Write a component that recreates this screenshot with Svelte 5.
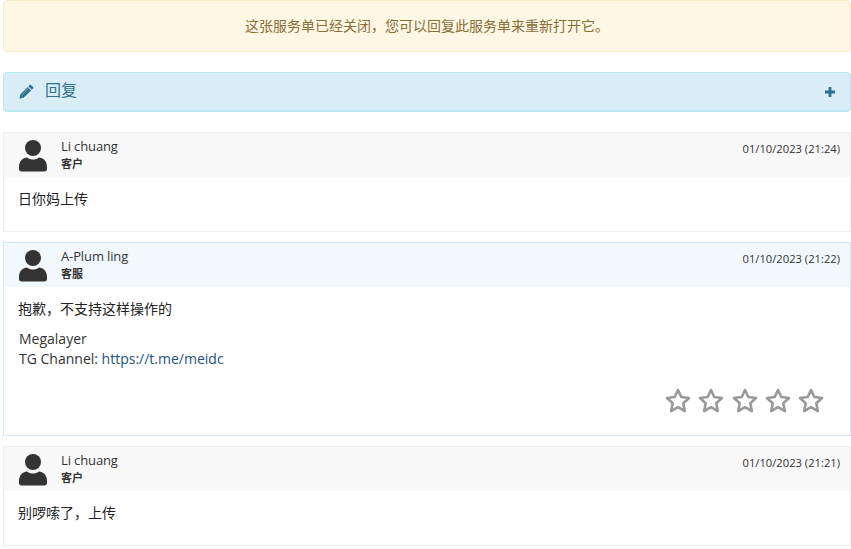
<script>
  const stars = [1, 2, 3, 4, 5];

  const replies = [
    { name: "Li chuang", role: "客户", date: "01/10/2023 (21:24)", staff: false, text: "日你妈上传" },
    { name: "A-Plum ling", role: "客服", date: "01/10/2023 (21:22)", staff: true, text: "抱歉，不支持这样操作的" },
    { name: "Li chuang", role: "客户", date: "01/10/2023 (21:21)", staff: false, text: "别啰嗦了，上传" },
  ];
</script>

<main>
  <div class="alert">这张服务单已经关闭，您可以回复此服务单来重新打开它。</div>

  <div class="reply-bar">
    <svg class="pencil" viewBox="0 0 16 16" width="15" height="15">
      <path d="M11.300 1a1 1 0 0 1 1.400 0l2.300 2.300a1 1 0 0 1 0 1.400l-1.300 1.300-3.700-3.700z M9.200 3.100l3.700 3.700-7.700 7.700-4.700 1.100 1-4.800z" />
      <path class="shine" d="M3 11.500l7-7" />
    </svg>
    <span class="bar-title">回复</span>
    <span class="plus">
      <svg viewBox="0 0 10 10" width="10" height="10"><path d="M3.600 0h2.800v3.600H10v2.800H6.400V10H3.600V6.400H0V3.600h3.600z" /></svg>
    </span>
  </div>

  {#each replies as r}
    <section class="ticket" class:staff={r.staff}>
      <header>
        <svg class="avatar" viewBox="0 0 28 32" width="28" height="32">
          <circle cx="14" cy="8" r="8" />
          <path d="M0 27c0-6 4-9.500 8-9.500 2 1.500 4 2 6 2s4-.5 6-2c4 0 8 3.500 8 9.500v2c0 1.500-1 2.500-2.500 2.500h-23C1 31.500 0 30.500 0 29z" />
        </svg>
        <div class="who">
          <div class="name">{r.name}</div>
          <div class="role">{r.role}</div>
        </div>
        <div class="date">{r.date}</div>
      </header>
      <div class="body">
        <p>{r.text}</p>
        {#if r.staff}
          <div class="sig">Megalayer<br />TG Channel: <a href="#top">https://t.me/meidc</a></div>
          <div class="rating">
            {#each stars as s}
              <svg viewBox="0 0 26 26" width="26" height="26">
                <path d="M13 2l3.300 7 7.700 1-5.700 5.300 1.500 7.700-6.800-3.800-6.800 3.800 1.500-7.700L2 10l7.700-1z" />
              </svg>
            {/each}
          </div>
        {/if}
      </div>
    </section>
  {/each}
</main>

<style>
  :global(body) {
    background: #fff;
    font-family: "Open Sans", "Noto Sans CJK SC", sans-serif;
    font-size: 14px;
    color: #333;
  }

  main {
    padding-left: 3px;
    display: flex;
    flex-direction: column;
  }

  .alert {
    height: 52px;
    box-sizing: border-box;
    display: flex;
    align-items: center;
    justify-content: center;
    padding-bottom: 2px;
    background: #fdf7e3;
    border: 1px solid #faebcc;
    border-radius: 4px;
    color: #8a6d3b;
    margin-bottom: 20px;
  }

  .reply-bar {
    height: 40px;
    box-sizing: border-box;
    display: flex;
    align-items: center;
    padding: 0 15px 2px;
    background: #d9edf7;
    border: 1px solid #bce8f1;
    border-bottom-width: 2px;
    border-radius: 4px;
    color: #31708f;
    margin-bottom: 20px;
  }

  .pencil {
    fill: #31708f;
    margin-right: 11px;
    margin-top: 1px;
  }

  .shine {
    fill: none;
    stroke: #d9edf7;
    stroke-width: 0.8;
    opacity: 0.6;
  }

  .bar-title {
    font-size: 16px;
    line-height: 20px;
    padding-bottom: 2px;
    flex: 1;
  }

  .plus {
    display: flex;
    margin-top: 2px;
  }

  .plus svg {
    fill: #31708f;
  }

  .ticket {
    border: 1px solid #eee;
    margin-bottom: 10px;
  }

  .ticket.staff {
    border-color: #cfe7f8;
  }

  header {
    height: 44px;
    display: flex;
    background: #f8f8f8;
    padding: 0 10px 0 15px;
  }

  .staff header {
    background: #f1f9ff;
  }

  .avatar {
    fill: #333;
    margin-top: 7px;
    margin-right: 14px;
  }

  .who {
    flex: 1;
    padding-top: 4px;
  }

  .name {
    font-size: 13px;
    line-height: 18px;
    letter-spacing: -0.12px;
  }

  .role {
    font-size: 11px;
    line-height: 14px;
    margin-top: 2px;
    font-weight: bold;
  }

  .date {
    font-size: 11.2px;
    line-height: 15px;
    padding-top: 8px;
  }

  .body {
    padding: 12px 15px 0;
    min-height: 42px;
  }

  p {
    margin: 0 0 0 -1px;
    line-height: 20px;
    color: #222;
  }

  .sig {
    margin-top: 10px;
    line-height: 20px;
  }

  a {
    color: #23527c;
    text-decoration: none;
  }

  .rating {
    display: flex;
    justify-content: flex-end;
    gap: 7.2px;
    padding: 19px 11px 21px 0;
  }

  .rating svg {
    fill: #fff;
    stroke: #999;
    stroke-width: 2.6;
    stroke-linejoin: round;
  }
</style>
